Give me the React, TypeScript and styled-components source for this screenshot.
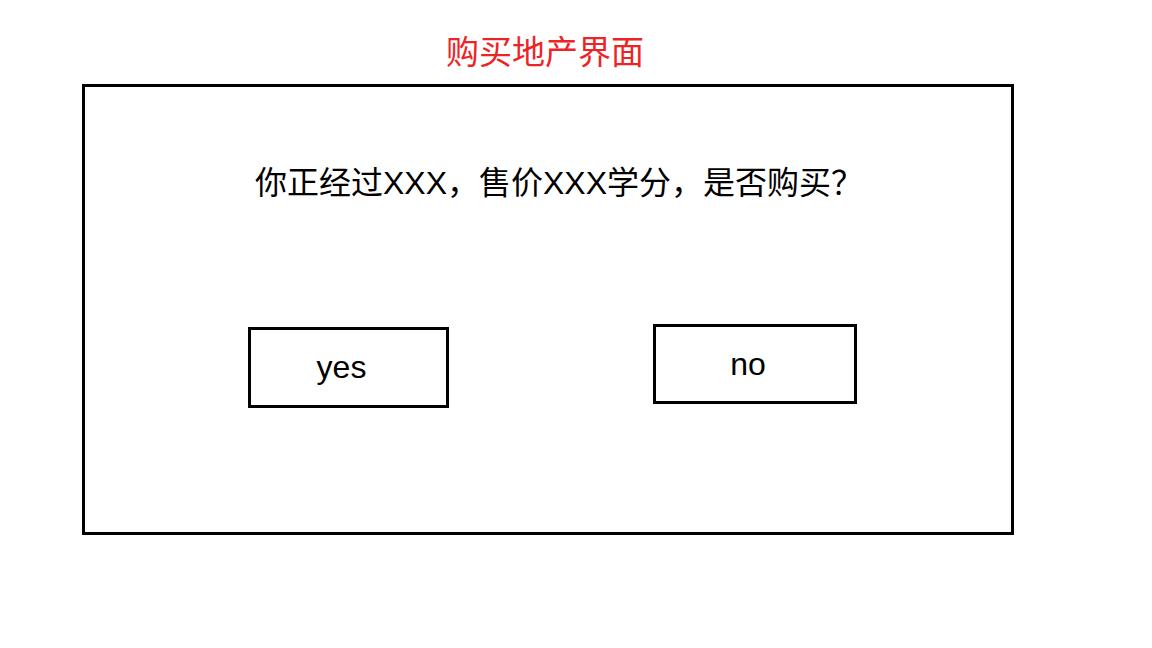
import React from "react";
import styled, { createGlobalStyle } from "styled-components";

const Global = createGlobalStyle`
  html, body { margin: 0; padding: 0; background: #ffffff; }
  body { font-family: "Liberation Sans", "Noto Sans CJK SC", sans-serif; color: #000; }
`;

const Page = styled.div`
  width: 1152px;
  height: 648px;
  padding: 30px 0 0 82px;
  box-sizing: border-box;
`;

const Column = styled.div`
  width: 932px;
  display: flex;
  flex-direction: column;
`;

const Title = styled.h1`
  margin: 0 6px 14px 0;
  font-family: "Noto Sans CJK SC", sans-serif;
  font-weight: 400;
  font-size: 33px;
  line-height: 40px;
  color: #ee2326;
  text-align: center;
`;

const Dialog = styled.div`
  height: 451px;
  box-sizing: border-box;
  border: 3px solid #000;
  display: flex;
  flex-direction: column;
  padding-top: 76px;
`;

const Question = styled.p`
  margin: 0 0 0 22px;
  font-family: "Liberation Sans", "Noto Sans CJK SC", sans-serif;
  font-size: 32px;
  line-height: 40px;
  text-align: center;
`;

const Actions = styled.div`
  margin-top: 121px;
  display: flex;
  align-items: flex-start;
  padding-left: 163px;
  gap: 204px;
`;

const Choice = styled.button<{ $w: number; $h: number; $top: number }>`
  width: ${(p) => p.$w}px;
  height: ${(p) => p.$h}px;
  margin-top: ${(p) => p.$top}px;
  box-sizing: border-box;
  border: 3px solid #000;
  background: #fff;
  padding: 0 14px 0 0;
  font-family: "Liberation Sans", "Noto Sans CJK SC", sans-serif;
  font-size: 32px;
  color: #000;
  display: flex;
  align-items: center;
  justify-content: center;
`;

export default function App() {
  return (
    <>
      <Global />
      <Page>
        <Column>
          <Title>购买地产界面</Title>
          <Dialog>
            <Question>你正经过XXX，售价XXX学分，是否购买？</Question>
            <Actions>
              <Choice $w={201} $h={81} $top={3}>yes</Choice>
              <Choice $w={204} $h={80} $top={0}>no</Choice>
            </Actions>
          </Dialog>
        </Column>
      </Page>
    </>
  );
}
